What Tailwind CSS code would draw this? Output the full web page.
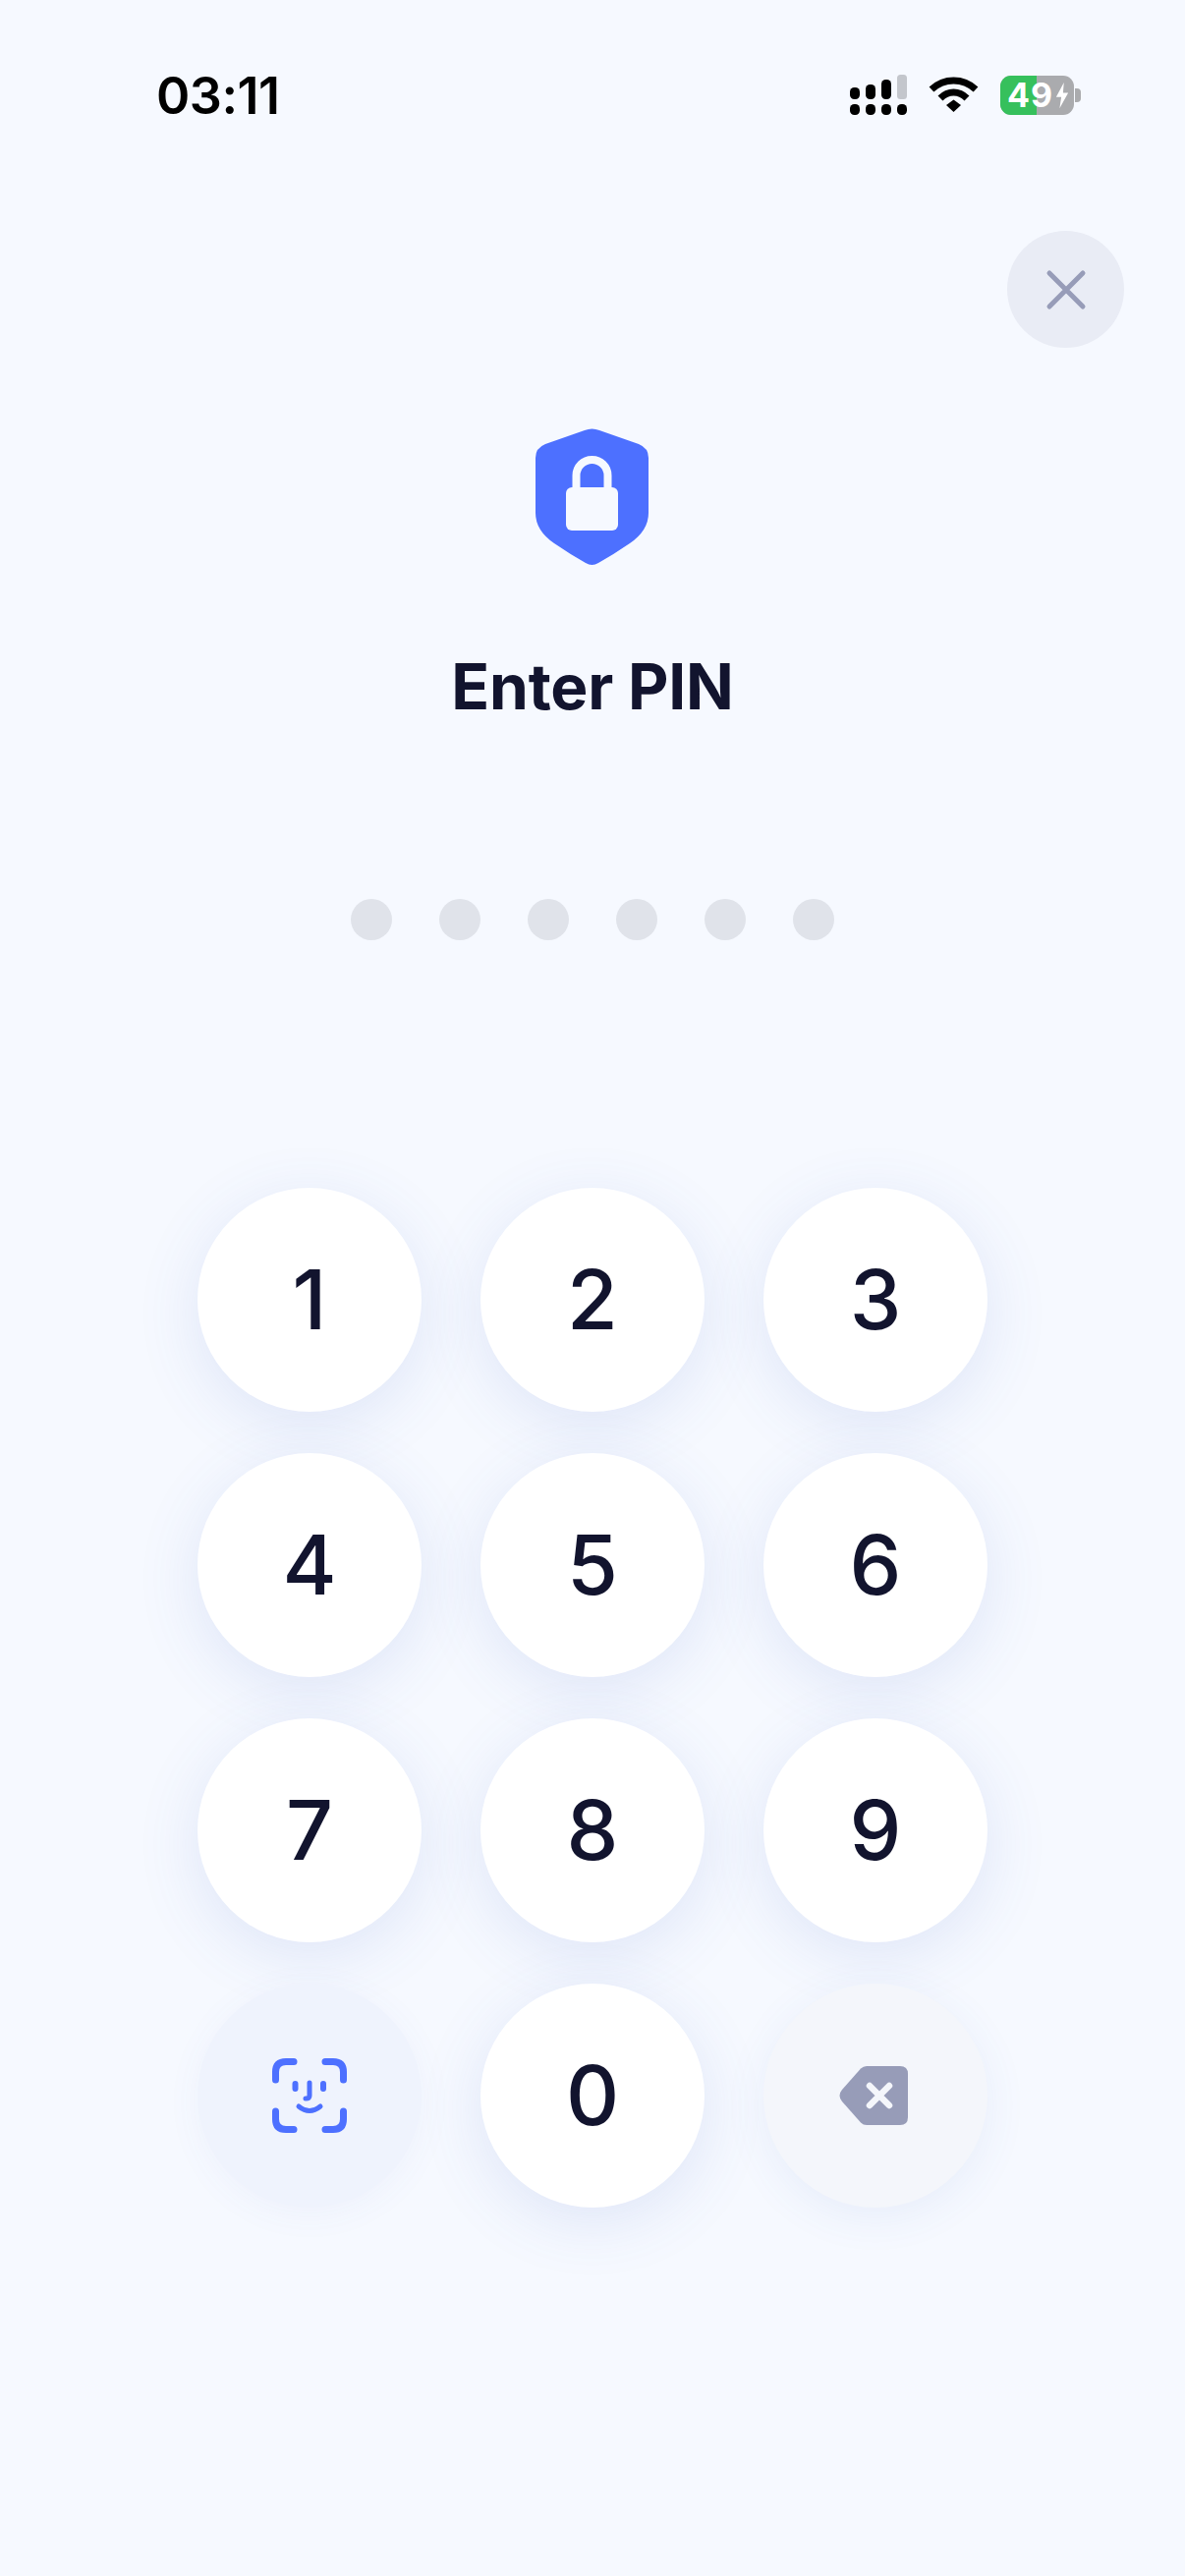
<!DOCTYPE html>
<html lang="en">
<head>
  <meta charset="UTF-8" />
  <meta name="viewport" content="width=device-width, initial-scale=1.0"/>
  <title>Enter PIN</title>
  <script src="https://cdn.jsdelivr.net/npm/@tailwindcss/browser@4"></script>
</head>
<body class="bg-[#f6f9ff] font-['Inter',sans-serif] text-[#12142e]">
  <div class="w-[1206px] h-[2622px] flex flex-col overflow-hidden">

    <!-- Status bar -->
    <div class="h-[100px] pt-[66px] pl-[159px] pr-[106px] flex justify-between items-start text-black">
      <span class="text-[52px] leading-[64px] h-[64px] font-semibold tracking-[-0.5px]">03:11</span>
      <div class="flex items-center gap-[22px] mt-[10px]">
        <svg width="58" height="42" viewBox="0 0 58 42">
          <rect x="0" y="13" width="10" height="12" rx="4.500" fill="#000"/>
          <rect x="16" y="10" width="10" height="15" rx="4.500" fill="#000"/>
          <rect x="32" y="5" width="10" height="20" rx="4.500" fill="#000"/>
          <rect x="48" y="0" width="10" height="25" rx="3.500" fill="#c3c6cc"/>
          <rect x="0" y="30" width="10" height="11" rx="4.500" fill="#000"/>
          <rect x="16" y="30" width="10" height="11" rx="4.500" fill="#000"/>
          <rect x="32" y="30" width="10" height="11" rx="4.500" fill="#000"/>
          <rect x="48" y="30" width="10" height="11" rx="4.500" fill="#000"/>
        </svg>
        <svg width="51" height="38" viewBox="0 0 51 38">
          <path d="M3 13 C16 1 35 1 48 13" fill="none" stroke="#000" stroke-width="7"/>
          <path d="M12 22 C20 14 31 14 39 22" fill="none" stroke="#000" stroke-width="7"/>
          <path d="M18 29 L25.500 23.500 L33 29 L25.500 36 Z" fill="#000"/>
        </svg>
        <div class="flex items-center">
          <div class="relative w-[75px] h-[40px] rounded-[11px] bg-[#aaabae] flex items-center pl-[7px] text-white text-[34px] font-bold leading-none">
            <div class="absolute left-0 top-0 w-[37px] h-[40px] rounded-l-[11px] bg-[#36c05c]"></div>
            <span class="relative tracking-[1px]">49</span>
            <svg class="relative ml-[2px]" width="14" height="30" viewBox="0 0 16 32"><path d="M10 1 L1 18 H7 L5 31 L15 13 H9 Z" fill="#fff"/></svg>
          </div>
          <div class="w-[6px] h-[14px] ml-[1px] rounded-r-[4px] bg-[#aaabae]"></div>
        </div>
      </div>
    </div>

    <!-- Close -->
    <div class="flex justify-end pr-[62px] mt-[135px]">
      <button class="w-[119px] h-[119px] rounded-full bg-[#e9ecf5] flex items-center justify-center">
        <svg width="42" height="42" viewBox="0 0 42 42"><path d="M4 4 L38 38 M38 4 L4 38" stroke="#979cb8" stroke-width="5" stroke-linecap="round"/></svg>
      </button>
    </div>

    <!-- Shield + title -->
    <div class="flex flex-col items-center pt-[82px]">
      <svg class="-ml-[1px]" width="115" height="140" viewBox="0 0 115 140">
        <path d="M50 2 Q57.500 -1 65 2 L105 16 Q115 20 115 30 L115 86 Q115 104 96 117 Q80 128 64 137 Q57.500 141 51 137 Q35 128 19 117 Q0 104 0 86 L0 30 Q0 20 10 16 Z" fill="#4d70ff"/>
        <path d="M41.500 70 V48 A16 16 0 0 1 73.500 48 V70" fill="none" stroke="#f6f9ff" stroke-width="8"/>
        <rect x="31" y="60" width="53" height="44" rx="6" fill="#f6f9ff"/>
      </svg>
      <h1 class="mt-[84px] text-[64px] leading-[78px] font-bold tracking-[-0.2px]">Enter PIN</h1>
    </div>

    <!-- PIN dots -->
    <div class="flex justify-center gap-[48px] mt-[177px]">
      <span class="w-[42px] h-[42px] rounded-full bg-[#e0e3ea]"></span>
      <span class="w-[42px] h-[42px] rounded-full bg-[#e0e3ea]"></span>
      <span class="w-[42px] h-[42px] rounded-full bg-[#e0e3ea]"></span>
      <span class="w-[42px] h-[42px] rounded-full bg-[#e0e3ea]"></span>
      <span class="w-[42px] h-[42px] rounded-full bg-[#e0e3ea]"></span>
      <span class="w-[42px] h-[42px] rounded-full bg-[#e0e3ea]"></span>
    </div>

    <!-- Keypad -->
    <div class="mt-[252px] ml-[201px] w-[804px] grid grid-cols-3 gap-x-[60px] gap-y-[42px] text-[84px] font-medium leading-none">
      <button class="h-[228px] rounded-full bg-white shadow-[0_14px_64px_rgba(70,100,190,0.13)] flex items-center justify-center">1</button>
      <button class="h-[228px] rounded-full bg-white shadow-[0_14px_64px_rgba(70,100,190,0.13)] flex items-center justify-center">2</button>
      <button class="h-[228px] rounded-full bg-white shadow-[0_14px_64px_rgba(70,100,190,0.13)] flex items-center justify-center">3</button>
      <button class="h-[228px] rounded-full bg-white shadow-[0_14px_64px_rgba(70,100,190,0.13)] flex items-center justify-center">4</button>
      <button class="h-[228px] rounded-full bg-white shadow-[0_14px_64px_rgba(70,100,190,0.13)] flex items-center justify-center">5</button>
      <button class="h-[228px] rounded-full bg-white shadow-[0_14px_64px_rgba(70,100,190,0.13)] flex items-center justify-center">6</button>
      <button class="h-[228px] rounded-full bg-white shadow-[0_14px_64px_rgba(70,100,190,0.13)] flex items-center justify-center">7</button>
      <button class="h-[228px] rounded-full bg-white shadow-[0_14px_64px_rgba(70,100,190,0.13)] flex items-center justify-center">8</button>
      <button class="h-[228px] rounded-full bg-white shadow-[0_14px_64px_rgba(70,100,190,0.13)] flex items-center justify-center">9</button>
      <button class="h-[228px] rounded-full bg-[#eff3fd] shadow-[0_6px_36px_rgba(70,100,190,0.05)] flex items-center justify-center">
        <svg width="76" height="76" viewBox="0 0 76 76" fill="none" stroke="#4d70ff" stroke-linecap="round">
          <path d="M3.500 22 V14 Q3.500 3.500 14 3.500 H22 M54 3.500 H62 Q72.500 3.500 72.500 14 V22 M3.500 54 V62 Q3.500 72.500 14 72.500 H22 M54 72.500 H62 Q72.500 72.500 72.500 62 V54" stroke-width="7"/>
          <path d="M23.500 26 V31 M52 26 V31" stroke-width="6"/>
          <path d="M38 25 V38 Q38 41 34 41" stroke-width="5"/>
          <path d="M27 49 Q38 58 49 49" stroke-width="5"/>
        </svg>
      </button>
      <button class="h-[228px] rounded-full bg-white shadow-[0_14px_64px_rgba(70,100,190,0.13)] flex items-center justify-center">0</button>
      <button class="h-[228px] rounded-full bg-[#f4f6fb] shadow-[0_10px_44px_rgba(70,100,190,0.08)] flex items-center justify-center">
        <svg class="mr-[5px]" width="70" height="60" viewBox="0 0 70 60">
          <path d="M22 2.500 Q24.500 0 28 0 H62 Q70 0 70 8 V52 Q70 60 62 60 H28 Q24.500 60 22 57.500 L3 36 Q-2 30 3 24 Z" fill="#979cb8"/>
          <path d="M31 20 L51 40 M51 20 L31 40" stroke="#f4f6fb" stroke-width="6.500" stroke-linecap="round"/>
        </svg>
      </button>
    </div>
  </div>
</body>
</html>
